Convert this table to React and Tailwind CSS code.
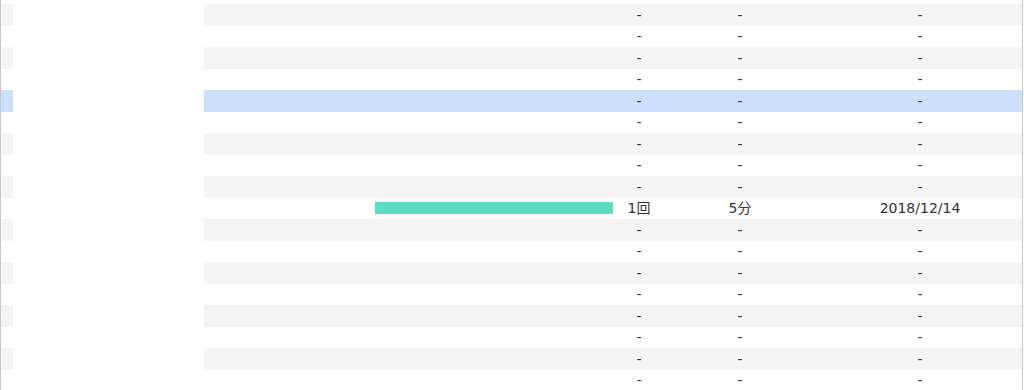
import React from "react";

const rows = Array.from({ length: 19 }, (_, i) => i - 1);

function Row({ idx }) {
  const selected = idx === 4;
  const barRow = idx === 9;
  const striped = idx % 2 === 0;
  const hidden = idx < 0;
  const bg = selected ? "bg-[#cce0fb]" : striped ? "bg-[#f4f4f4]" : "bg-white";
  return (
    <div className="flex h-[21.5px] items-center text-[14px] text-[#333]">
      <div className={`h-full w-[12px] ${bg}`} />
      <div className="h-full w-[191px] bg-white" />
      <div className={`flex h-full flex-1 items-center ${bg}`}>
        <div className="flex h-full w-[414px] items-center justify-end pr-[5px]">
          {barRow && <div className="h-[12px] w-[238px] bg-[#5cdbbe]" />}
        </div>
        {!hidden && (
          <>
            <div className="w-[42px] text-center leading-none">{barRow ? "1回" : "-"}</div>
            <div className="w-[160px] text-center leading-none">{barRow ? "5分" : "-"}</div>
            <div className="w-[200px] text-center leading-none">{barRow ? "2018/12/14" : "-"}</div>
          </>
        )}
      </div>
    </div>
  );
}

export default function App() {
  return (
    <div
      className="h-[390px] w-[1024px] overflow-hidden bg-white"
      style={{ fontFamily: '"DejaVu Sans", "Noto Sans CJK JP", sans-serif' }}
    >
      <div className="h-[390px] w-[1023px] overflow-hidden border-l border-r border-[#c8c8c8]">
        <div className="-mt-[17.5px]">
          {rows.map((i) => (
            <Row key={i} idx={i} />
          ))}
        </div>
      </div>
    </div>
  );
}
